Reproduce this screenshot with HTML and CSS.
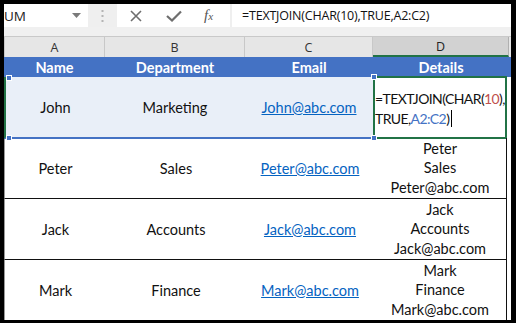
FILE: index.html
```html
<!DOCTYPE html>
<html>
<head>
<meta charset="utf-8">
<link rel="stylesheet" href="styles.css">
</head>
<body>
<div class="frame">
  <div class="fbar">
    <div class="namebox"><span class="nb-text">UM</span><svg class="nb-arrow" width="9" height="5" viewBox="0 0 9 5"><path d="M0 0H9L4.5 5Z" fill="#7a7a7a"/></svg></div>
    <div class="grip"><svg width="3" height="12" viewBox="0 0 3 12"><rect x="0.5" y="0" width="2" height="2" fill="#b4b4b4"/><rect x="0.5" y="5" width="2" height="2" fill="#b4b4b4"/><rect x="0.5" y="10" width="2" height="2" fill="#b4b4b4"/></svg></div>
    <div class="tools">
      <svg class="t-x" width="12" height="12" viewBox="0 0 12 12"><path d="M1 1L11 11M11 1L1 11" stroke="#6e6e6e" stroke-width="1.6"/></svg>
      <svg class="t-ok" width="16" height="12" viewBox="0 0 16 12"><path d="M1 6L6 10.5L15 1.5" stroke="#6e6e6e" stroke-width="2.2" fill="none"/></svg>
      <span class="t-fx">f<span class="sub">x</span></span>
    </div>
    <div class="formula">=TEXTJOIN(CHAR(10),TRUE,A2:C2)</div>
  </div>
  <div class="gapstrip"></div>
  <div class="colhdr">
    <div class="ch">A</div>
    <div class="ch">B</div>
    <div class="ch">C</div>
    <div class="ch sel">D</div>
    <div class="ch-fill"></div>
  </div>
  <div class="head">
    <div>Name</div>
    <div>Department</div>
    <div>Email</div>
    <div>Details</div>
  </div>
  <div class="row r-edit">
    <div class="range">
      <div class="cell">John</div>
      <div class="cell">Marketing</div>
      <div class="cell"><a class="link">John@abc.com</a></div>
      <span class="hdl h-tl"></span><span class="hdl h-bl"></span><span class="hdl h-tr"></span><span class="hdl h-br"></span>
    </div>
    <div class="edit"><div><span>=TEXTJOIN(CHAR(</span><span class="red">10</span><span>),</span></div><div>TRUE,<span class="blue">A2:C2</span>)<span class="caret"></span></div></div>
  </div>
  <div class="row">
    <div class="cell">Peter</div>
    <div class="cell">Sales</div>
    <div class="cell"><a class="link">Peter@abc.com</a></div>
    <div class="cell multi"><div>Peter</div><div>Sales</div><div>Peter@abc.com</div></div>
  </div>
  <div class="row">
    <div class="cell">Jack</div>
    <div class="cell">Accounts</div>
    <div class="cell"><a class="link">Jack@abc.com</a></div>
    <div class="cell multi"><div>Jack</div><div>Accounts</div><div>Jack@abc.com</div></div>
  </div>
  <div class="row">
    <div class="cell">Mark</div>
    <div class="cell">Finance</div>
    <div class="cell"><a class="link">Mark@abc.com</a></div>
    <div class="cell multi"><div>Mark</div><div>Finance</div><div>Mark@abc.com</div></div>
  </div>
</div>
</body>
</html>
```
FILE: styles.css
```css
html, body { margin: 0; padding: 0; }
body {
  background: #000;
  width: 516px;
  height: 323px;
  overflow: hidden;
  padding: 4px 0 0 4px;
  box-sizing: border-box;
  font-family: Lato, "Liberation Sans", sans-serif;
}
.frame {
  width: 507px;
  height: 316px;
  background: #fff;
  overflow: hidden;
  display: flex;
  flex-direction: column;
}
.fbar {
  height: 23px;
  display: flex;
  background: #efefef;
  flex: none;
}
.namebox {
  width: 84px;
  background: #fff;
  display: flex;
  align-items: center;
}
.nb-text {
  font-family: "Open Sans", "Liberation Sans", sans-serif;
  font-size: 13.5px;
  color: #222;
  letter-spacing: -0.2px;
}
.nb-arrow { margin-left: auto; margin-right: 7px; }
.grip {
  width: 29px;
  display: flex;
  align-items: center;
  justify-content: center;
}
.tools {
  width: 113px;
  background: #fff;
  display: flex;
  align-items: center;
}
.t-x { margin-left: 13px; }
.t-ok { margin-left: 24px; }
.t-fx {
  margin-left: 22px;
  font-family: "Liberation Serif", serif;
  font-style: italic;
  font-size: 15px;
  color: #555;
}
.t-fx .sub { font-size: 11px; }
.formula {
  margin-left: 2px;
  flex: 1;
  background: #fff;
  font-family: "Open Sans", "Liberation Sans", sans-serif;
  font-size: 12.5px;
  color: #111;
  padding-left: 10px;
  line-height: 23px;
  letter-spacing: -0.2px;
  white-space: nowrap;
}
.gapstrip {
  height: 10px;
  background: #f0f0f0;
  border-bottom: 1px solid #c9c9c9;
  flex: none;
  box-sizing: border-box;
}
.colhdr {
  height: 20px;
  display: flex;
  background: #e6e6e6;
  flex: none;
}
.ch {
  display: flex;
  align-items: center;
  justify-content: center;
  font-family: "Open Sans", "Liberation Sans", sans-serif;
  font-size: 12.5px;
  color: #333;
  border-right: 1px solid #c8c8c8;
  box-sizing: border-box;
}
.ch:nth-child(1) { width: 101px; border-left: 1px solid #c8c8c8; }
.ch:nth-child(2) { width: 140px; }
.ch:nth-child(3) { width: 128px; }
.ch.sel {
  width: 136px;
  background: #d2d2d2;
  border-bottom: 2px solid #217346;
  color: #222;
  border-right: 1px solid #b0b0b0;
}
.ch-fill { flex: 1; }
.head {
  height: 20px;
  background: #4472c4;
  display: grid;
  grid-template-columns: 101px 140px 128px 136px;
  color: #fff;
  font-weight: bold;
  font-size: 14.5px;
  flex: none;
}
.head > div {
  display: flex;
  align-items: center;
  justify-content: center;
}
.row {
  height: 60px;
  display: grid;
  grid-template-columns: 101px 140px 128px 132px;
  border-bottom: 1px solid #111;
  border-left: 1px solid #999;
  border-right: 1px solid #111;
  width: 501px;
  flex: none;
  font-size: 14.5px;
  color: #111;
}
.row.r-edit {
  height: 61px;
  grid-template-columns: 369px 134px;
  border-bottom: 0;
  border-left: 0;
  border-right: 0;
  width: 503px;
}
.cell {
  display: flex;
  align-items: center;
  justify-content: center;
}
.cell.multi {
  flex-direction: column;
  line-height: 19.5px;
}
.link {
  color: #0563c1;
  text-decoration: underline;
}
.range {
  position: relative;
  display: grid;
  grid-template-columns: 99px 140px 128px;
  background: #e9eff8;
  border-left: 2px solid #217346;
  border-bottom: 2px solid #4472c4;
}
.hdl {
  position: absolute;
  width: 4px;
  height: 4px;
  background: #4472c4;
  border: 1px solid #fff;
}
.h-tl { left: 0px; top: -2px; }
.h-bl { left: 0px; bottom: -4px; }
.h-tr { right: -4px; top: -3px; }
.h-br { right: -4px; bottom: -4px; }
.edit {
  border: 2px solid #217346;
  margin-top: -1px;
  background: #fff;
  padding: 11px 0 0 0;
  line-height: 20px;
  font-size: 14px;
  letter-spacing: -0.6px;
  color: #111;
  white-space: nowrap;
  box-sizing: border-box;
  height: 63px;
  overflow: hidden;
}
.red { color: #c0504d; }
.blue { color: #4472c4; }
.caret {
  display: inline-block;
  width: 1px;
  height: 17px;
  background: #000;
  vertical-align: -3px;
  margin-left: 2px;
}
```
